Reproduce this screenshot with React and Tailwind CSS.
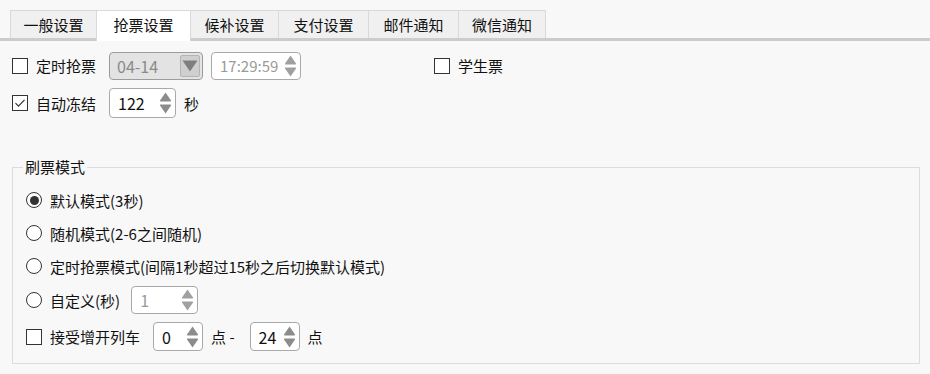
import React from 'react';

const font = { fontFamily: '"Noto Sans CJK SC", "Noto Sans", sans-serif' };

const tabs = [
  { label: '一般设置', w: 'w-[87px]' },
  { label: '抢票设置', w: 'w-[95px]', active: true },
  { label: '候补设置', w: 'w-[89px]' },
  { label: '支付设置', w: 'w-[91px]' },
  { label: '邮件通知', w: 'w-[91px]' },
  { label: '微信通知', w: 'w-[88px]' },
];

const SpinArrows = ({ color = '#8c8c8c' }) => (
  <svg width="13" height="24" viewBox="0 0 13 24" className="shrink-0">
    <path d="M6.5 1.5 L12 9.5 Q12.3 10.5 11.2 10.5 L1.8 10.5 Q0.7 10.5 1 9.5 Z" fill={color} />
    <path d="M6.5 22.5 L12 14.5 Q12.3 13.5 11.2 13.5 L1.8 13.5 Q0.7 13.5 1 14.5 Z" fill={color} />
  </svg>
);

const SpinBox = ({ value, className = '', textSize = 'text-[16px]', disabled }) => (
  <div
    className={`flex items-center justify-between pl-[8px] pr-[3px] bg-white border border-[#a9a9a9] rounded-[4px] ${className}`}
  >
    <span className={`${textSize} leading-none ${disabled ? 'text-[#9a9a9a]' : 'text-[#111]'}`}>{value}</span>
    <SpinArrows color={disabled ? '#a0a0a0' : '#8c8c8c'} />
  </div>
);

const CheckBox = ({ checked }) => (
  <div className="w-[16px] h-[16px] border border-[#333] bg-white flex items-center justify-center shrink-0">
    {checked && (
      <svg width="12" height="12" viewBox="0 0 12 12">
        <path d="M1.5 6.2 L4.5 9.2 L10.5 2.8" fill="none" stroke="#333" strokeWidth="1.2" />
      </svg>
    )}
  </div>
);

const Radio = ({ checked }) => (
  <div className="w-[16px] h-[16px] rounded-full border border-[#333] bg-white flex items-center justify-center shrink-0">
    {checked && <div className="w-[9px] h-[9px] rounded-full bg-[#333]" />}
  </div>
);

export default function App() {
  return (
    <div className="w-[930px] h-[374px] bg-[#f8f8f8] text-[#111] overflow-hidden" style={font}>
      {/* Tabs */}
      <div className="pt-[10px]">
        <div className="flex items-end pl-[10px] h-[28px]">
          {tabs.map((t) => (
            <div
              key={t.label}
              className={`${t.w} flex items-center justify-center text-[15px] leading-none border border-[#d9d9d9] -ml-px first:ml-0 ${
                t.active ? 'bg-white h-[31px] -mb-[3px] relative z-10 border-b-0' : 'bg-[#f0f0f0] h-[28px] border-b-0'
              }`}
            >
              <span className={t.active ? '-mt-[3px]' : ''}>{t.label}</span>
            </div>
          ))}
        </div>
        <div className="h-[3px] bg-[#caccce]" />
      </div>

      {/* Top options */}
      <div className="pl-[12px] pt-[10px]">
        <div className="flex items-center h-[29px]">
          <CheckBox />
          <span className="ml-[8px] text-[15px] leading-none">定时抢票</span>
          <div className="ml-[13px] w-[94px] h-[28px] flex items-center justify-between pl-[7px] pr-[2px] bg-[#e3e3e3] border border-[#9c9c9c] rounded-[4px]">
            <span className="text-[16px] leading-none text-[#8a8a8a]">04-14</span>
            <div className="w-[20px] h-[22px] bg-[#cfcfcf] border border-[#b4b4b4] rounded-[2px] flex items-center justify-center">
              <svg width="16" height="12" viewBox="0 0 16 12">
                <path d="M0.5 0.5 L15.5 0.5 L8 11.5 Z" fill="#7e7e7e" />
              </svg>
            </div>
          </div>
          <SpinBox value="17:29:59" disabled textSize="text-[15px]" className="ml-[8px] w-[90px] h-[28px]" />
          <div className="ml-[133px] flex items-center">
            <CheckBox />
            <span className="ml-[8px] text-[15px] leading-none">学生票</span>
          </div>
        </div>
        <div className="flex items-center h-[30px] mt-[8px]">
          <CheckBox checked />
          <span className="ml-[8px] text-[15px] leading-none">自动冻结</span>
          <SpinBox value="122" className="ml-[13px] w-[67px] h-[30px]" />
          <span className="ml-[8px] text-[15px] leading-none">秒</span>
        </div>
      </div>

      {/* Group box */}
      <div className="mt-[49px] ml-[12px] w-[908px] h-[197px] border border-[#dcdcdc] relative px-[13px] pt-[21px]">
        <span className="absolute -top-[9px] left-[10px] px-[2px] bg-[#f8f8f8] text-[15px] leading-none">刷票模式</span>
        <div className="flex flex-col">
          <div className="flex items-center h-[22px]">
            <Radio checked />
            <span className="ml-[8px] text-[15px] leading-none">默认模式(3秒)</span>
          </div>
          <div className="flex items-center h-[22px] mt-[11px]">
            <Radio />
            <span className="ml-[8px] text-[15px] leading-none">随机模式(2-6之间随机)</span>
          </div>
          <div className="flex items-center h-[22px] mt-[11px]">
            <Radio />
            <span className="ml-[8px] text-[15px] leading-none">定时抢票模式(间隔1秒超过15秒之后切换默认模式)</span>
          </div>
          <div className="flex items-center h-[28px] mt-[9px]">
            <Radio />
            <span className="ml-[8px] text-[15px] leading-none">自定义(秒)</span>
            <SpinBox value="1" disabled className="ml-[11px] w-[67px] h-[28px]" />
          </div>
          <div className="flex items-center h-[29px] mt-[8px]">
            <CheckBox />
            <span className="ml-[8px] text-[15px] leading-none">接受增开列车</span>
            <SpinBox value="0" className="ml-[13px] w-[50px] h-[29px]" />
            <span className="ml-[8px] text-[15px] leading-none">点 -</span>
            <SpinBox value="24" className="ml-[15px] w-[50px] h-[29px]" />
            <span className="ml-[8px] text-[15px] leading-none">点</span>
          </div>
        </div>
      </div>
    </div>
  );
}
